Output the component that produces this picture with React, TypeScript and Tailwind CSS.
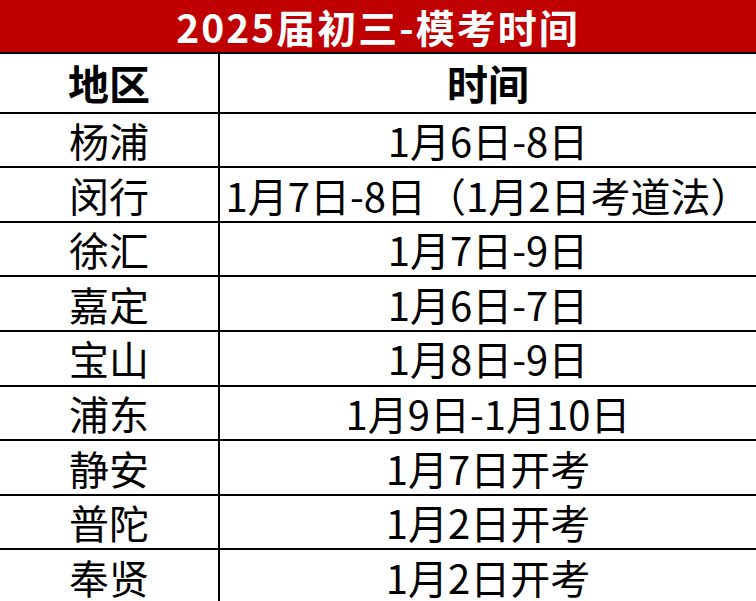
const rows: [string, string][] = [
  ["杨浦", "1月6日-8日"],
  ["闵行", "1月7日-8日（1月2日考道法）"],
  ["徐汇", "1月7日-9日"],
  ["嘉定", "1月6日-7日"],
  ["宝山", "1月8日-9日"],
  ["浦东", "1月9日-1月10日"],
  ["静安", "1月7日开考"],
  ["普陀", "1月2日开考"],
  ["奉贤", "1月2日开考"],
];

export default function App() {
  return (
    <div
      className="w-[756px] h-[601px] overflow-hidden bg-white text-black"
      style={{ fontFamily: '"Noto Sans CJK SC", "Noto Sans", sans-serif' }}
    >
      {/* title bar */}
      <div className="h-[54px] bg-[#c00000] border-b-2 border-black flex items-center justify-center">
        <span className="text-white font-bold text-[39px] leading-[1.2] tracking-[2px]">2025届初三-模考时间</span>
      </div>

      {/* header row */}
      <div className="flex h-[59.7px] border-b-2 border-black">
        <div className="w-[220px] border-r-2 border-black flex items-center justify-center font-bold text-[41px] leading-[1.2]">
          地区
        </div>
        <div className="flex-1 flex items-center justify-center font-bold text-[41px] leading-[1.2]">
          时间
        </div>
      </div>

      {rows.map(([area, time]) => (
        <div key={area} className="flex h-[54.6px] border-b-2 border-black">
          <div className="w-[220px] border-r-2 border-black flex items-center justify-center text-[40px] leading-[1.2]">
            {area}
          </div>
          <div className="flex-1 flex items-center justify-center text-[40px] leading-[1.2] whitespace-nowrap">
            {time}
          </div>
        </div>
      ))}
    </div>
  );
}
